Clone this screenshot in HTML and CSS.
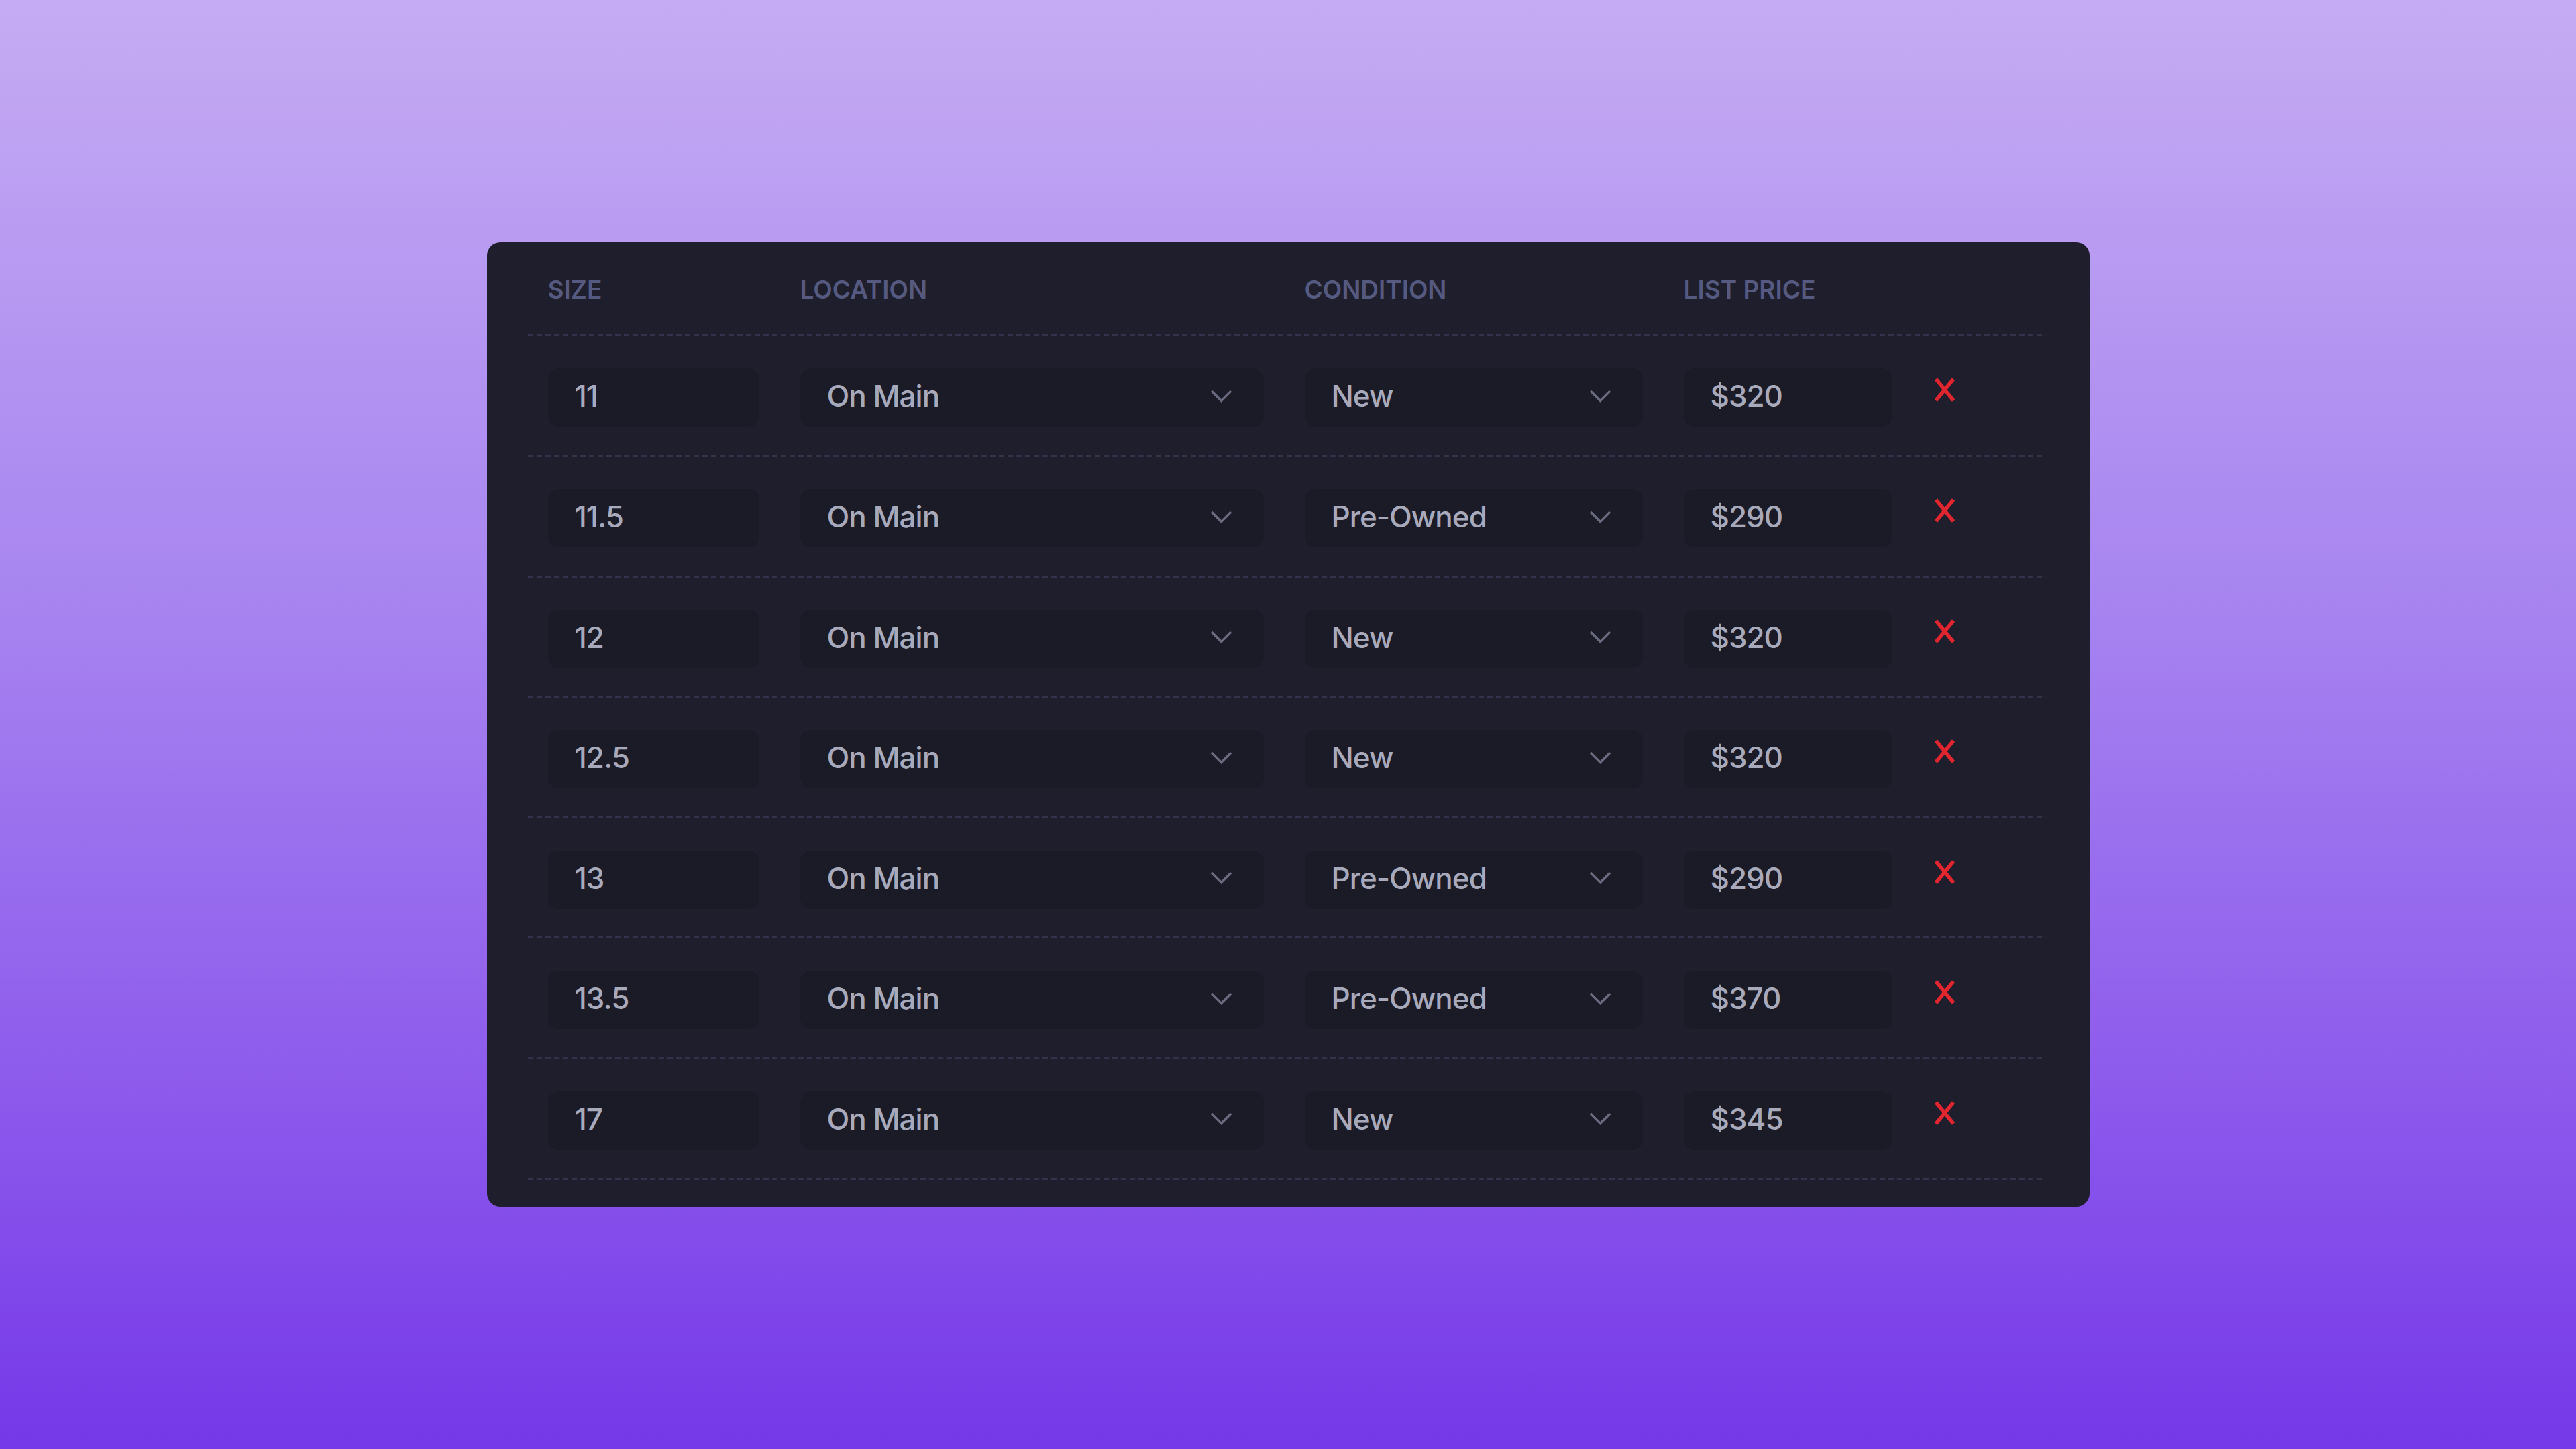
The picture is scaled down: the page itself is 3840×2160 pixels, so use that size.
FILE: index.html
```html
<!DOCTYPE html>
<html lang="en">
<head>
<meta charset="utf-8">
<title>Inventory</title>
<link rel="stylesheet" href="styles.css">
</head>
<body>
<main class="stage">
  <section class="card">
    <div class="grid head">
      <div class="th">SIZE</div>
      <div class="th">LOCATION</div>
      <div class="th">CONDITION</div>
      <div class="th">LIST PRICE</div>
      <div></div>
    </div>
    <div class="rule"></div>

    <div class="grid row">
      <div class="field">11</div>
      <div class="field select"><span>On Main</span><svg class="chev" viewBox="0 0 33 19"><polyline points="2,2 16.5,16.5 31,2"/></svg></div>
      <div class="field select"><span>New</span><svg class="chev" viewBox="0 0 33 19"><polyline points="2,2 16.5,16.5 31,2"/></svg></div>
      <div class="field">$320</div>
      <svg class="del" viewBox="0 0 30 36"><line x1="2" y1="2" x2="28" y2="34"/><line x1="28" y1="2" x2="2" y2="34"/></svg>
    </div>
    <div class="rule"></div>

    <div class="grid row">
      <div class="field">11.5</div>
      <div class="field select"><span>On Main</span><svg class="chev" viewBox="0 0 33 19"><polyline points="2,2 16.5,16.5 31,2"/></svg></div>
      <div class="field select"><span>Pre-Owned</span><svg class="chev" viewBox="0 0 33 19"><polyline points="2,2 16.5,16.5 31,2"/></svg></div>
      <div class="field">$290</div>
      <svg class="del" viewBox="0 0 30 36"><line x1="2" y1="2" x2="28" y2="34"/><line x1="28" y1="2" x2="2" y2="34"/></svg>
    </div>
    <div class="rule"></div>

    <div class="grid row">
      <div class="field">12</div>
      <div class="field select"><span>On Main</span><svg class="chev" viewBox="0 0 33 19"><polyline points="2,2 16.5,16.5 31,2"/></svg></div>
      <div class="field select"><span>New</span><svg class="chev" viewBox="0 0 33 19"><polyline points="2,2 16.5,16.5 31,2"/></svg></div>
      <div class="field">$320</div>
      <svg class="del" viewBox="0 0 30 36"><line x1="2" y1="2" x2="28" y2="34"/><line x1="28" y1="2" x2="2" y2="34"/></svg>
    </div>
    <div class="rule"></div>

    <div class="grid row">
      <div class="field">12.5</div>
      <div class="field select"><span>On Main</span><svg class="chev" viewBox="0 0 33 19"><polyline points="2,2 16.5,16.5 31,2"/></svg></div>
      <div class="field select"><span>New</span><svg class="chev" viewBox="0 0 33 19"><polyline points="2,2 16.5,16.5 31,2"/></svg></div>
      <div class="field">$320</div>
      <svg class="del" viewBox="0 0 30 36"><line x1="2" y1="2" x2="28" y2="34"/><line x1="28" y1="2" x2="2" y2="34"/></svg>
    </div>
    <div class="rule"></div>

    <div class="grid row">
      <div class="field">13</div>
      <div class="field select"><span>On Main</span><svg class="chev" viewBox="0 0 33 19"><polyline points="2,2 16.5,16.5 31,2"/></svg></div>
      <div class="field select"><span>Pre-Owned</span><svg class="chev" viewBox="0 0 33 19"><polyline points="2,2 16.5,16.5 31,2"/></svg></div>
      <div class="field">$290</div>
      <svg class="del" viewBox="0 0 30 36"><line x1="2" y1="2" x2="28" y2="34"/><line x1="28" y1="2" x2="2" y2="34"/></svg>
    </div>
    <div class="rule"></div>

    <div class="grid row">
      <div class="field">13.5</div>
      <div class="field select"><span>On Main</span><svg class="chev" viewBox="0 0 33 19"><polyline points="2,2 16.5,16.5 31,2"/></svg></div>
      <div class="field select"><span>Pre-Owned</span><svg class="chev" viewBox="0 0 33 19"><polyline points="2,2 16.5,16.5 31,2"/></svg></div>
      <div class="field">$370</div>
      <svg class="del" viewBox="0 0 30 36"><line x1="2" y1="2" x2="28" y2="34"/><line x1="28" y1="2" x2="2" y2="34"/></svg>
    </div>
    <div class="rule"></div>

    <div class="grid row">
      <div class="field">17</div>
      <div class="field select"><span>On Main</span><svg class="chev" viewBox="0 0 33 19"><polyline points="2,2 16.5,16.5 31,2"/></svg></div>
      <div class="field select"><span>New</span><svg class="chev" viewBox="0 0 33 19"><polyline points="2,2 16.5,16.5 31,2"/></svg></div>
      <div class="field">$345</div>
      <svg class="del" viewBox="0 0 30 36"><line x1="2" y1="2" x2="28" y2="34"/><line x1="28" y1="2" x2="2" y2="34"/></svg>
    </div>
    <div class="rule"></div>
  </section>
</main>
</body>
</html>
```
FILE: styles.css
```css
* { box-sizing: border-box; }
html, body {
  margin: 0;
  padding: 0;
  height: 100%;
}
body {
  font-family: Inter, "Noto Sans", sans-serif;
  background: linear-gradient(180deg, #c5abf3 0%, #a886f0 40%, #8d5aec 75%, #7538e8 100%);
}
.stage {
  height: 100%;
  display: flex;
  align-items: center;
  justify-content: center;
}
.card {
  width: 2389px;
  background: #1f1e2c;
  border-radius: 20px;
  padding: 0 66px 40px 61px;
}
.grid {
  display: grid;
  grid-template-columns: 315px 691px 504px 311px auto;
  column-gap: 61px;
  padding: 0 30px;
}
.head {
  padding-top: 47px;
  padding-bottom: 43px;
}
.th {
  font-size: 37px;
  line-height: 47px;
  font-weight: 600;
  color: #575a80;
}
.rule {
  height: 3px;
  background: repeating-linear-gradient(90deg, #32334a 0 8px, transparent 8px 13px);
}
.row {
  padding-top: 48px;
  padding-bottom: 41.6px;
  align-items: center;
}
.field {
  height: 87px;
  border-radius: 16px;
  background: #1b1a27;
  color: #a8aabc;
  font-size: 44px;
  font-weight: 450;
  letter-spacing: -1px;
  padding: 0 47px 5px 40px;
  display: flex;
  align-items: center;
  justify-content: space-between;
}
.chev {
  width: 33px;
  height: 19px;
  fill: none;
  stroke: #6b6b80;
  stroke-width: 3.5;
}
.del {
  width: 30px;
  height: 36px;
  margin-left: 2px;
  align-self: start;
  margin-top: 14px;
  stroke: #e1262f;
  stroke-width: 5.5;
}
```
